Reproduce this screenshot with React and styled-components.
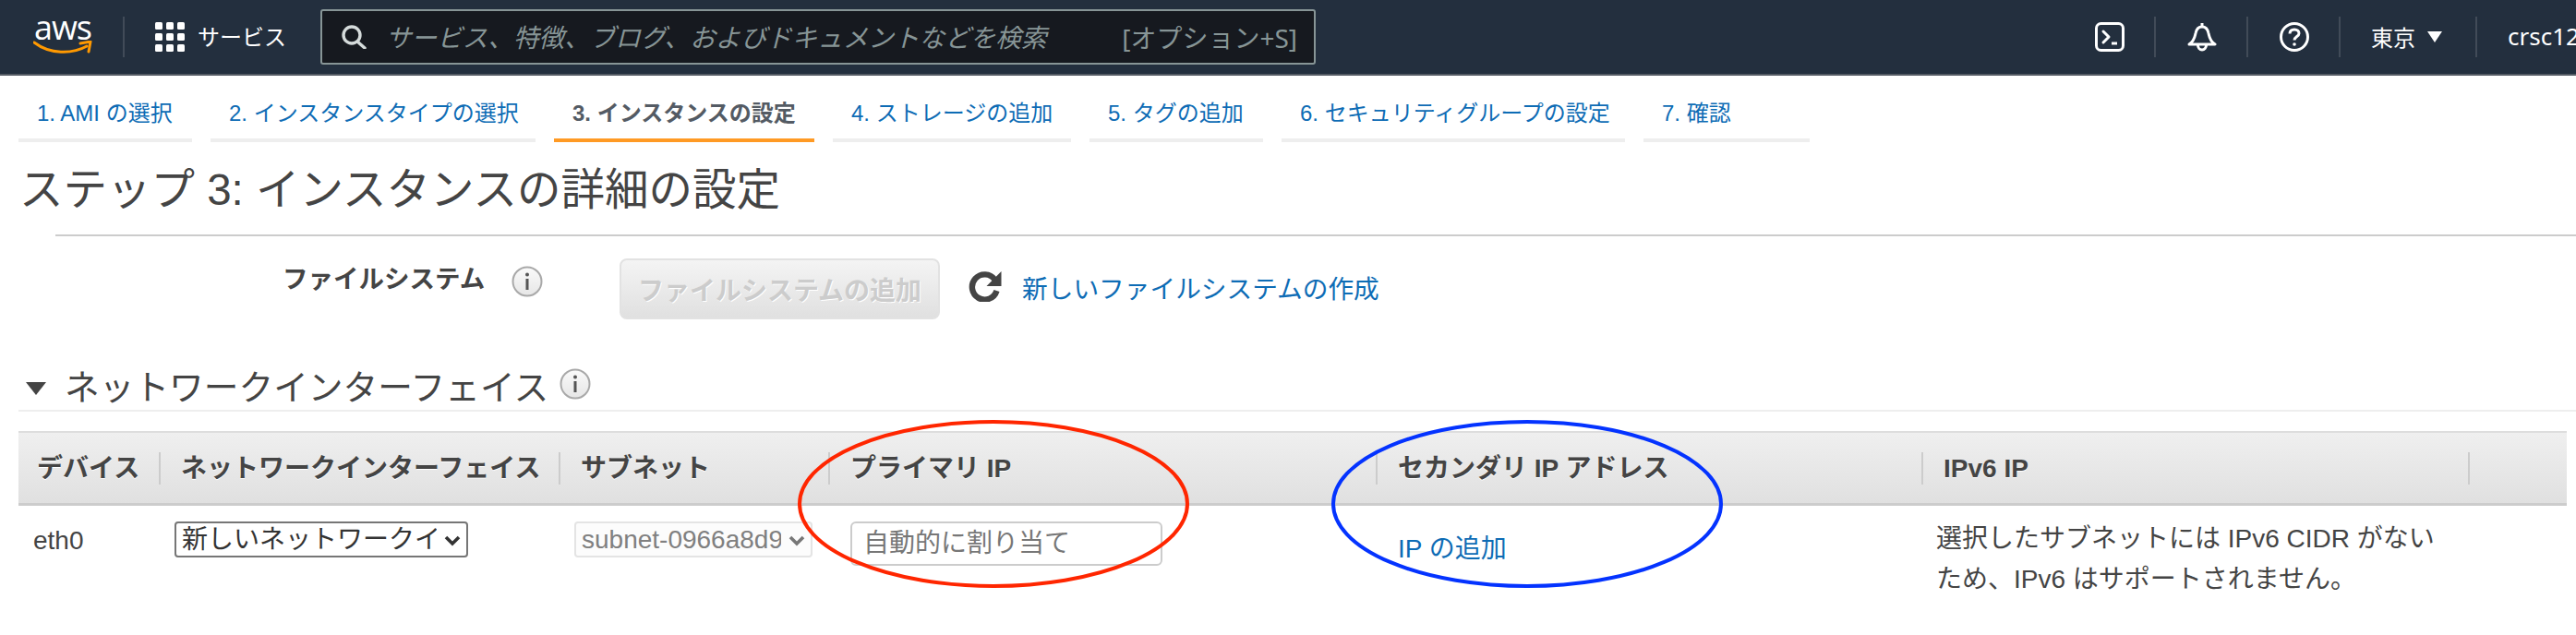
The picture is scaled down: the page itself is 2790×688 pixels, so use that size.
import React from "react";
import styled, { createGlobalStyle } from "styled-components";

const SANS = `"Liberation Sans", "Noto Sans CJK JP", sans-serif`;
const NAV = `"Noto Sans", "Noto Sans CJK JP", sans-serif`;
const COLUMNS = "152px 433px 292px 593px 591px 592px 107px";

const tabs = [
  { label: "1. AMI の選択", width: 188 },
  { label: "2. インスタンスタイプの選択", width: 352 },
  { label: "3. インスタンスの設定", width: 282, active: true },
  { label: "4. ストレージの追加", width: 258 },
  { label: "5. タグの追加", width: 188 },
  { label: "6. セキュリティグループの設定", width: 372 },
  { label: "7. 確認", width: 180 },
];

const heads = [
  "デバイス",
  "ネットワークインターフェイス",
  "サブネット",
  "プライマリ IP",
  "セカンダリ IP アドレス",
  "IPv6 IP",
  "",
];

const InfoIcon = () => (
  <InfoSvg viewBox="0 0 34 34">
    <defs>
      <linearGradient id="infoFill" x1="0" y1="0" x2="0" y2="1">
        <stop offset="0" stopColor="#fafafa" />
        <stop offset="1" stopColor="#e6e6e6" />
      </linearGradient>
    </defs>
    <circle cx="17" cy="17" r="15.5" fill="url(#infoFill)" stroke="#a9a9a9" strokeWidth="2" />
    <circle cx="17" cy="9.5" r="2" fill="#555" />
    <rect x="15.5" y="14" width="3" height="12" fill="#555" />
  </InfoSvg>
);

const SelectArrow = ({ color }) => (
  <Chevron viewBox="0 0 18 12">
    <path d="M2 2 L9 9 L16 2" fill="none" stroke={color} strokeWidth="3.6" />
  </Chevron>
);

const App = () => {
  return (
    <Page>
      <GlobalStyle />
      <TopBar>
        <Logo>
          <LogoText>aws</LogoText>
          <svg width="64" height="15" viewBox="0 0 64 15">
            <path d="M1 2 C18 15 42 15 58 6" fill="none" stroke="#f90" strokeWidth="3" strokeLinecap="round" />
            <path d="M51 3 L62 1 L60 12" fill="none" stroke="#f90" strokeWidth="3" strokeLinejoin="round" strokeLinecap="round" />
          </svg>
        </Logo>
        <Divider $left={33} $right={33} />
        <svg width="32" height="32" viewBox="0 0 32 32" fill="#fff">
          {[0, 12, 24].map((y) =>
            [0, 12, 24].map((x) => <rect key={`${x}-${y}`} x={x} y={y} width="8" height="8" rx="1.5" />)
          )}
        </svg>
        <Services>サービス</Services>
        <SearchBox>
          <svg width="29" height="26" viewBox="0 0 29 26" fill="none" stroke="#d5dbdb" strokeWidth="3.4">
            <circle cx="12" cy="11" r="9" />
            <path d="M18 18 L26 25" strokeLinecap="round" />
          </svg>
          <SearchInput placeholder="サービス、特徴、ブログ、およびドキュメントなどを検索" readOnly />
          <Shortcut>[オプション+S]</Shortcut>
        </SearchBox>
        <TerminalIcon viewBox="0 0 32 32" fill="none" stroke="#fff" strokeWidth="3">
          <rect x="1.5" y="1.5" width="29" height="29" rx="5" />
          <path d="M9 10 L15 16 L9 22" strokeLinecap="round" strokeLinejoin="round" />
          <path d="M18 23 H24" />
        </TerminalIcon>
        <Divider $left={32} $right={34} />
        <svg width="32" height="32" viewBox="0 0 32 32" fill="none" stroke="#fff" strokeWidth="3">
          <path d="M2 24 C8 20 8 16 9 12 C10 7 13 5 16 5 C19 5 22 7 23 12 C24 16 24 20 30 24 Z" strokeLinejoin="round" />
          <path d="M16 1 V4" />
          <path d="M11.5 25 A4.5 5 0 0 0 20.5 25" />
        </svg>
        <Divider $left={32} $right={34} />
        <svg width="32" height="32" viewBox="0 0 32 32" fill="none" stroke="#fff" strokeWidth="3">
          <circle cx="16" cy="16" r="14.5" />
          <path d="M11 12.5 C11 9.5 13 8 16 8 C19 8 21 9.8 21 12.2 C21 15.5 16 15.5 16 19.5" />
          <circle cx="16" cy="24" r="1.8" fill="#fff" stroke="none" />
        </svg>
        <Divider $left={32} $right={33} />
        <Region>東京</Region>
        <Caret viewBox="0 0 16 12">
          <path d="M0 0 H16 L8 12 Z" fill="#fff" />
        </Caret>
        <Divider $left={36} $right={33} />
        <Account>crsc120</Account>
      </TopBar>

      <TabBar>
        {tabs.map((tab) => (
          <Tab key={tab.label} $width={tab.width} $active={tab.active}>
            {tab.label}
          </Tab>
        ))}
      </TabBar>

      <PageTitle>ステップ 3: インスタンスの詳細の設定</PageTitle>
      <TitleRule />

      <FileSystemRow>
        <FieldLabel>ファイルシステム</FieldLabel>
        <InfoSlot>
          <InfoIcon />
        </InfoSlot>
        <DisabledButton disabled>ファイルシステムの追加</DisabledButton>
        <RefreshIcon viewBox="0 0 37 34">
          <path d="M29.5 10 A13.6 13.6 0 1 0 31.5 22" fill="none" stroke="#444" strokeWidth="6.4" />
          <path d="M36.5 1 V17 H20.5 Z" fill="#444" />
        </RefreshIcon>
        <FileSystemLink href="#">新しいファイルシステムの作成</FileSystemLink>
      </FileSystemRow>

      <SectionHeader>
        <SectionCaret viewBox="0 0 22 14">
          <path d="M0 0 H22 L11 14 Z" fill="#444" />
        </SectionCaret>
        <SectionTitle>ネットワークインターフェイス</SectionTitle>
        <SectionInfo>
          <InfoIcon />
        </SectionInfo>
      </SectionHeader>

      <TableWrap>
        <HeadRow>
          {heads.map((head, i) => (
            <HeadCell key={i} $first={i === 0}>
              {head}
            </HeadCell>
          ))}
        </HeadRow>
        <BodyRow>
          <DeviceCell>eth0</DeviceCell>
          <SelectCell>
            <SelectWrap $width={318}>
              <NetworkSelect defaultValue="new">
                <option value="new">新しいネットワークインターフェイス</option>
              </NetworkSelect>
              <SelectArrow color="#333" />
            </SelectWrap>
          </SelectCell>
          <SelectCell>
            <SelectWrap $width={258}>
              <SubnetSelect disabled defaultValue="s">
                <option value="s">subnet-0966a8d9f3c1b2e47</option>
              </SubnetSelect>
              <SelectArrow color="#777" />
            </SelectWrap>
          </SelectCell>
          <InputCell>
            <IpInput placeholder="自動的に割り当て" readOnly />
          </InputCell>
          <LinkCell>
            <TableLink href="#">IP の追加</TableLink>
          </LinkCell>
          <NoteCell>
            選択したサブネットには IPv6 CIDR がない
            <br />
            ため、IPv6 はサポートされません。
          </NoteCell>
        </BodyRow>
        <Annotation $left={844} viewBox="0 0 424 182">
          <ellipse cx="212" cy="91" rx="210" ry="89" fill="none" stroke="#ff2600" strokeWidth="4" />
        </Annotation>
        <Annotation $left={1422} viewBox="0 0 424 182">
          <ellipse cx="212" cy="91" rx="210" ry="89" fill="none" stroke="#0433ff" strokeWidth="4" />
        </Annotation>
      </TableWrap>
    </Page>
  );
};

export default App;

const GlobalStyle = createGlobalStyle`
  html, body {
    margin: 0;
    padding: 0;
    background: #fff;
  }
`;

const Page = styled.div`
  width: 2790px;
  height: 688px;
  overflow: hidden;
  font-family: ${SANS};
  color: #444;
  background: #fff;
`;

const TopBar = styled.header`
  box-sizing: border-box;
  height: 82px;
  display: flex;
  align-items: center;
  padding: 0 0 0 36px;
  background: #232f3e;
  border-bottom: 2px solid #545b64;
  font-family: ${NAV};
  color: #fff;
  white-space: nowrap;

  & > * {
    flex: none;
  }
`;

const Logo = styled.div`
  width: 64px;
  height: 40px;
  display: flex;
  flex-direction: column;
  align-items: center;
`;

const LogoText = styled.span`
  height: 24px;
  font-size: 36px;
  line-height: 20px;
  letter-spacing: -1px;
  font-family: "Open Sans", sans-serif;
`;

const Divider = styled.div`
  width: 2px;
  height: 44px;
  margin: 0 ${(p) => p.$right}px 0 ${(p) => p.$left}px;
  background: #414b58;
`;

const Services = styled.span`
  width: 115px;
  margin: 0 0 3px 14px;
  font-size: 24px;
`;

const SearchBox = styled.div`
  box-sizing: border-box;
  width: 1078px;
  height: 60px;
  margin-left: 18px;
  padding: 0 18px 0 20px;
  display: flex;
  align-items: center;
  background: #16191f;
  border: 2px solid #879596;
  border-radius: 3px;
`;

const SearchInput = styled.input`
  flex: 1;
  margin-left: 20px;
  padding: 0;
  background: transparent;
  border: none;
  outline: none;
  font-family: ${NAV};
  font-size: 27.6px;
  font-style: italic;

  &::placeholder {
    color: #879596;
    opacity: 1;
  }
`;

const Shortcut = styled.span`
  font-size: 28px;
  color: #879596;
`;

const TerminalIcon = styled.svg`
  width: 32px;
  height: 32px;
  margin-left: 844px;
`;

const Region = styled.span`
  margin-bottom: 2px;
  font-size: 24px;
`;

const Caret = styled.svg`
  width: 16px;
  height: 12px;
  margin-left: 13px;
`;

const Account = styled.span`
  margin-bottom: 2px;
  font-size: 26px;
`;

const TabBar = styled.nav`
  display: flex;
  gap: 20px;
  margin-top: 12px;
  padding-left: 20px;
`;

const Tab = styled.div`
  box-sizing: border-box;
  width: ${(p) => p.$width}px;
  height: 60px;
  padding: 0 0 3px 20px;
  display: flex;
  align-items: center;
  border-bottom: 4px solid ${(p) => (p.$active ? "#ff9a24" : "#eee")};
  font-size: 24px;
  font-weight: ${(p) => (p.$active ? 700 : 400)};
  color: ${(p) => (p.$active ? "#545b64" : "#0e6cb5")};
  white-space: nowrap;
`;

const PageTitle = styled.h1`
  margin: 22px 0 0 21px;
  font-size: 47.5px;
  line-height: 60px;
  font-weight: 400;
  color: #444;
`;

const TitleRule = styled.div`
  height: 2px;
  margin: 18px 0 0 60px;
  background: #ccc;
`;

const FileSystemRow = styled.div`
  display: flex;
  align-items: flex-start;
  margin-top: 24px;
  padding-left: 306px;
`;

const FieldLabel = styled.label`
  width: 248px;
  font-size: 27.5px;
  font-weight: 700;
  line-height: 46px;
`;

const InfoSvg = styled.svg`
  display: block;
  width: 34px;
  height: 34px;
`;

const InfoSlot = styled.div`
  margin: 8px 83px 0 0;
`;

const DisabledButton = styled.button`
  box-sizing: border-box;
  width: 347px;
  height: 66px;
  padding: 0;
  border: 2px solid #e2e2e2;
  border-radius: 8px;
  background: linear-gradient(#f4f4f4, #e0e0e0);
  color: #ccc;
  font-family: ${SANS};
  font-size: 28px;
  font-weight: 700;
  text-shadow: 1px 1px 0 #fff;
`;

const RefreshIcon = styled.svg`
  width: 37px;
  height: 34px;
  margin: 13px 22px 0 30px;
`;

const FileSystemLink = styled.a`
  font-size: 27.7px;
  line-height: 67px;
  color: #0e6cb5;
  text-decoration: none;
`;

const SectionHeader = styled.div`
  box-sizing: border-box;
  height: 52px;
  display: flex;
  margin: 47px 0 0 20px;
  padding-left: 8px;
  border-bottom: 2px solid #eee;
`;

const SectionCaret = styled.svg`
  width: 22px;
  height: 14px;
  margin: 20px 20px 0 0;
`;

const SectionTitle = styled.h2`
  margin: 0;
  font-size: 37.7px;
  font-weight: 400;
  line-height: 52px;
  color: #444;
`;

const SectionInfo = styled.div`
  margin: 5px 0 0 12px;
`;

const TableWrap = styled.div`
  position: relative;
  margin: 21px 10px 0 20px;
`;

const HeadRow = styled.div`
  box-sizing: border-box;
  height: 81px;
  display: grid;
  grid-template-columns: ${COLUMNS};
  align-items: center;
  background: linear-gradient(#efefef, #e0e0e0);
  border-top: 2px solid #ddd;
  border-bottom: 3px solid #ccc;
`;

const HeadCell = styled.div`
  box-sizing: border-box;
  height: 35px;
  padding-left: ${(p) => (p.$first ? 20 : 22)}px;
  border-left: ${(p) => (p.$first ? "none" : "2px solid #ccc")};
  font-size: 28px;
  font-weight: 700;
  line-height: 35px;
  text-shadow: 0 1px 0 #fff;
  white-space: nowrap;
`;

const BodyRow = styled.div`
  display: grid;
  grid-template-columns: ${COLUMNS};
  align-items: start;
`;

const DeviceCell = styled.div`
  padding: 19px 0 0 16px;
  font-size: 28px;
  line-height: 38px;
`;

const SelectCell = styled.div`
  padding: 17px 0 0 17px;
`;

const SelectWrap = styled.div`
  position: relative;
  width: ${(p) => p.$width}px;
  height: 39px;
`;

const Chevron = styled.svg`
  position: absolute;
  top: 15px;
  right: 8px;
  width: 18px;
  height: 12px;
  pointer-events: none;
`;

const NetworkSelect = styled.select`
  box-sizing: border-box;
  display: block;
  width: 100%;
  height: 39px;
  padding: 0 32px 0 6px;
  appearance: none;
  background: #fff;
  border: 2px solid #767676;
  border-radius: 4px;
  font-family: ${SANS};
  font-size: 28px;
  color: #333;
`;

const SubnetSelect = styled(NetworkSelect)`
  border-color: #e4e4e4;
  background: #fcfcfc;
  color: #808080;
  opacity: 1;
`;

const InputCell = styled.div`
  padding: 17px 0 0 24px;
`;

const IpInput = styled.input`
  box-sizing: border-box;
  width: 338px;
  height: 48px;
  padding: 0 12px;
  border: 2px solid #ccc;
  border-radius: 6px;
  outline: none;
  font-family: ${SANS};
  font-size: 28px;

  &::placeholder {
    color: #777;
    opacity: 1;
  }
`;

const LinkCell = styled.div`
  padding: 28px 0 0 24px;
`;

const TableLink = styled.a`
  font-size: 28px;
  line-height: 38px;
  color: #0e6cb5;
  text-decoration: none;
`;

const NoteCell = styled.div`
  padding: 14px 0 0 16px;
  font-size: 28px;
  line-height: 44px;
  white-space: nowrap;
`;

const Annotation = styled.svg`
  position: absolute;
  top: -12px;
  left: ${(p) => p.$left}px;
  width: 424px;
  height: 182px;
`;
